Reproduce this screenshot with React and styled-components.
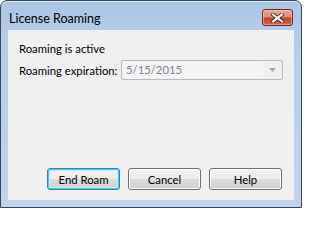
import React from "react";
import styled, { createGlobalStyle } from "styled-components";

const GlobalStyle = createGlobalStyle`
  html, body { margin: 0; padding: 0; background: #ffffff; }
  body { font-family: Lato, "Noto Sans", sans-serif; }
`;

const Window = styled.div`
  box-sizing: border-box;
  width: 302px;
  height: 208px;
  border: 1px solid #3b4652;
  border-radius: 7px 7px 0 0;
  background: linear-gradient(to bottom, #a9c4e2 0px, #b5cce7 30px, #bfd5ee 100%);
  display: flex;
  flex-direction: column;
  overflow: hidden;
  box-shadow: inset 0 1px 0 #d8e6f5;
`;

const TitleBar = styled.div`
  height: 29px;
  display: flex;
  align-items: flex-start;
  justify-content: space-between;
  padding: 0 8px 0 8px;
`;

const Title = styled.span`
  font-size: 12.5px;
  line-height: 15px;
  color: #000;
  margin-top: 10px;
  white-space: nowrap;
`;

const CloseButton = styled.div`
  box-sizing: border-box;
  width: 31px;
  height: 17px;
  margin-top: 8px;
  border: 1px solid #6e2b25;
  border-radius: 3px;
  background: linear-gradient(to bottom, #eaa99a 0%, #d88a78 45%, #c0422a 55%, #cf6a4c 100%);
  box-shadow: inset 0 0 0 1px rgba(255, 220, 210, 0.45);
  display: flex;
  align-items: center;
  justify-content: center;
`;

const Content = styled.div`
  flex: 1;
  margin: 0 7px 7px 7px;
  background: #f0f0f0;
  display: flex;
  flex-direction: column;
  padding: 11px 11px 10px 11px;
  font-size: 11.3px;
  color: #000;
  white-space: nowrap;
`;

const Line = styled.div`
  line-height: 15px;
  height: 15px;
`;

const Row = styled.div`
  display: flex;
  align-items: center;
  margin-top: 4px;
  height: 20px;
`;

const Label = styled.span`
  flex: none;
  width: 102px;
  line-height: 15px;
`;

const Combo = styled.div`
  box-sizing: border-box;
  flex: none;
  width: 162px;
  height: 20px;
  border: 1px solid #b7bcc1;
  border-radius: 2px;
  background: #f0f0f0;
  display: flex;
  align-items: stretch;
  padding: 1px;
`;

const ComboValue = styled.div`
  flex: 1;
  background: #f4f4f4;
  color: #7f8490;
  padding-left: 3px;
  line-height: 16px;
`;

const ComboArrow = styled.div`
  width: 18px;
  display: flex;
  align-items: center;
  justify-content: center;
`;

const Buttons = styled.div`
  margin-top: auto;
  display: flex;
  justify-content: flex-end;
  gap: 8px;
  padding-right: 1px;
`;

const Button = styled.div`
  box-sizing: border-box;
  width: 73px;
  height: 22px;
  border: 1px solid ${(p) => (p.$default ? "#3c7fb1" : "#707070")};
  border-radius: 3px;
  background: linear-gradient(to bottom, #f2f2f2 0%, #ebebeb 50%, #dddddd 50%, #cfcfcf 100%);
  box-shadow: ${(p) =>
    p.$default ? "inset 0 0 0 1px #48c6f5, inset 0 0 0 2px #c9ecfb" : "inset 0 0 0 1px #fcfcfc"};
  display: flex;
  align-items: center;
  justify-content: center;
  color: #000;
  line-height: 15px;
`;

export default function App() {
  return (
    <>
      <GlobalStyle />
      <Window>
        <TitleBar>
          <Title>License Roaming</Title>
          <CloseButton>
            <svg width="13" height="10" viewBox="0 0 13 10">
              <path d="M2 1.5 L11 8.5 M11 1.5 L2 8.5" stroke="#3a2a2a" strokeWidth="3.6" strokeLinecap="square" />
              <path d="M2 1.5 L11 8.5 M11 1.5 L2 8.5" stroke="#ffffff" strokeWidth="2" strokeLinecap="square" />
            </svg>
          </CloseButton>
        </TitleBar>
        <Content>
          <Line>Roaming is active</Line>
          <Row>
            <Label>Roaming expiration:</Label>
            <Combo>
              <ComboValue>5/15/2015</ComboValue>
              <ComboArrow>
                <svg width="7" height="4" viewBox="0 0 7 4">
                  <path d="M0 0 H7 L3.5 4 Z" fill="#a8a8a8" />
                </svg>
              </ComboArrow>
            </Combo>
          </Row>
          <Buttons>
            <Button $default>End Roam</Button>
            <Button>Cancel</Button>
            <Button>Help</Button>
          </Buttons>
        </Content>
      </Window>
    </>
  );
}
